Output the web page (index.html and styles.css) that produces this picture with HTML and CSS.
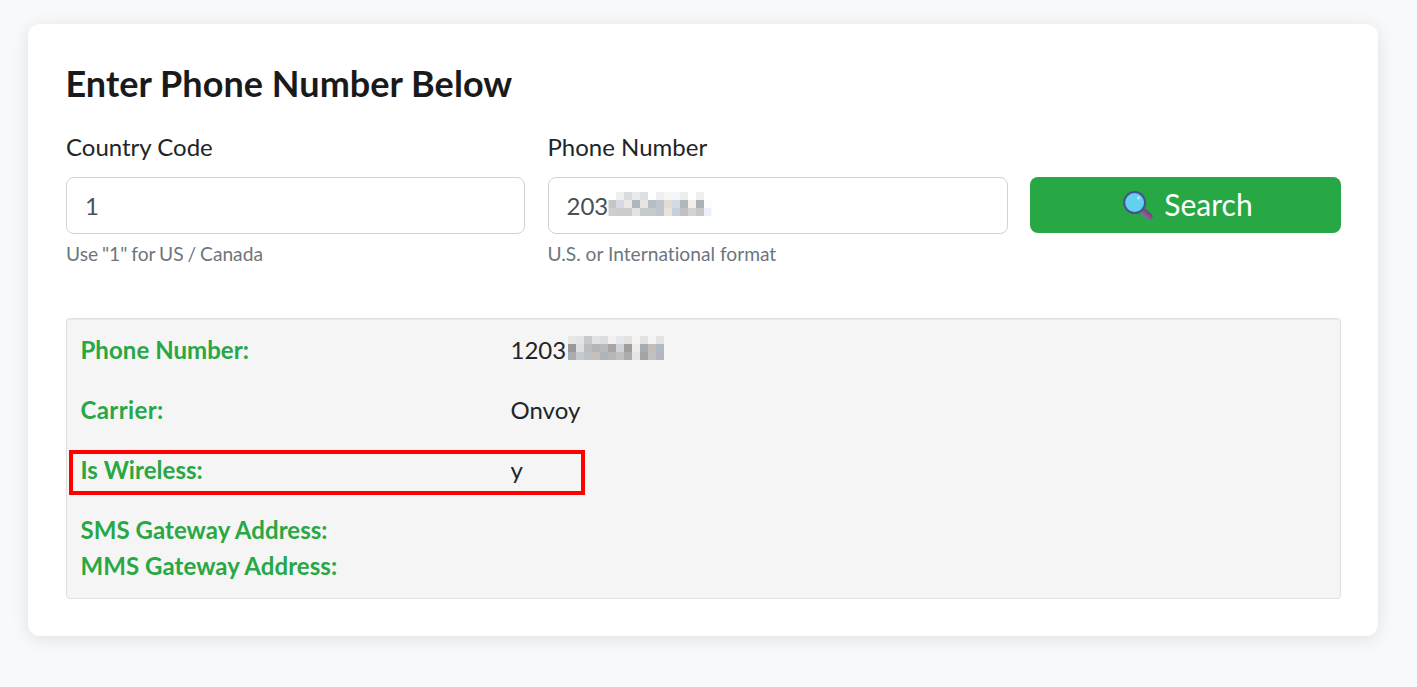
FILE: index.html
```html
<!DOCTYPE html>
<html lang="en">
<head>
    <meta charset="UTF-8">
    <title>Phone Number Lookup</title>
    <link rel="stylesheet" href="styles.css">
</head>
<body>
    <div class="card">
        <h1>Enter Phone Number Below</h1>

        <form class="lookup-form">
            <div class="form-group">
                <label for="countryCode">Country Code</label>
                <input type="text" id="countryCode" value="1">
                <small class="tight">Use "1" for US / Canada</small>
            </div>

            <div class="form-group">
                <label for="phoneNumber">Phone Number</label>
                <div class="input-wrap">
                    <input type="text" id="phoneNumber" value="203">
                    <svg class="mask mask-input" width="104" height="24" shape-rendering="crispEdges"></svg>
                </div>
                <small>U.S. or International format</small>
            </div>

            <button type="button" class="btn-search">
                <svg class="search-icon" viewBox="0 0 32 32" width="32" height="32">
                    <defs>
                        <linearGradient id="handle" x1="0" y1="1" x2="1" y2="0">
                            <stop offset="0" stop-color="#9b5fae"/>
                            <stop offset="1" stop-color="#70446f"/>
                        </linearGradient>
                    </defs>
                    <path d="M20 20l3 3" stroke="#533b78" stroke-width="3"/>
                    <path d="M22.5 22l4.8 4.8" stroke="url(#handle)" stroke-width="6.4" stroke-linecap="round"/>
                    <circle cx="12.6" cy="12.6" r="10.5" fill="#63d0ee" stroke="#4b4f8f" stroke-width="2"/>
                    <circle cx="16.5" cy="7.9" r="1.7" fill="#b5e7fa"/>
                </svg>
                <span>Search</span>
            </button>
        </form>

        <div class="results">
            <div class="row">
                <strong>Phone Number:</strong>
                <span class="value">1203<svg class="mask mask-result" width="96" height="24" shape-rendering="crispEdges"></svg></span>
            </div>
            <div class="row">
                <strong class="wide">Carrier:</strong>
                <span class="value">Onvoy</span>
            </div>
            <div class="row highlight">
                <strong>Is Wireless:</strong>
                <span class="value">y</span>
            </div>
            <div class="row compact">
                <strong>SMS Gateway Address:</strong>
            </div>
            <div class="row compact">
                <strong>MMS Gateway Address:</strong>
            </div>
        </div>
    </div>

    <script src="script.js"></script>
</body>
</html>
```
FILE: styles.css
```css
* {
    box-sizing: border-box;
}

body {
    margin: 0;
    padding: 24px 39px 0 28px;
    min-height: 687px;
    background-color: #f8f9fb;
    color: #212529;
    font-family: Lato, sans-serif;
    font-size: 24px;
    line-height: 36px;
    font-variant-ligatures: none;
}

.card {
    height: 612px;
    padding: 37px 37px 37px 38px;
    background-color: #fff;
    border-radius: 12px;
    box-shadow: 0 3px 18px rgba(0, 0, 0, 0.1);
}

h1 {
    margin: 0 0 24px -0.5px;
    color: #1a1a1a;
    font-size: 36px;
    font-weight: bold;
    line-height: 44px;
    letter-spacing: 0.05px;
}

.lookup-form {
    display: grid;
    grid-template-columns: 459px 460px 311px;
    justify-content: space-between;
    margin-bottom: 50px;
}

.form-group {
    display: flex;
    flex-direction: column;
}

label {
    margin-bottom: 12px;
}

input {
    display: block;
    width: 100%;
    height: 57px;
    padding: 0 18px;
    border: 1px solid #ced4da;
    border-radius: 8px;
    background-color: #fff;
    color: #495057;
    font-family: inherit;
    font-size: 24px;
}

.input-wrap {
    position: relative;
}

small {
    margin-top: 5px;
    color: #6c757d;
    font-size: 19.2px;
    line-height: 29px;
}

small.tight {
    word-spacing: -1px;
}

.btn-search {
    display: flex;
    justify-content: center;
    align-items: center;
    gap: 10px;
    height: 56px;
    margin-top: 48px;
    padding: 0 0 3px 4px;
    border: none;
    border-radius: 8px;
    background-color: #28a745;
    color: #fff;
    font-family: inherit;
    font-size: 30px;
    cursor: pointer;
}

.search-icon {
    position: relative;
    top: 2px;
}

.results {
    height: 281px;
    padding: 13px 13.5px;
    border: 1px solid #e0e0e0;
    border-radius: 4px;
    background-color: #f5f5f5;
    box-shadow: inset 0 1px 1px rgba(0, 0, 0, 0.05);
}

.row {
    position: relative;
    display: grid;
    grid-template-columns: 430px 1fr;
    height: 36px;
    margin-bottom: 24px;
}

.row.compact {
    margin-bottom: 0;
}

.row strong {
    color: #28a745;
    letter-spacing: 0.05px;
}

.row strong.wide {
    letter-spacing: 0.4px;
}

.value {
    position: relative;
}

.mask {
    position: absolute;
}

.mask-input {
    left: 60px;
    top: 15px;
    clip-path: inset(0 0 0 1px);
}

.mask-result {
    left: 57.5px;
    top: 4px;
}

.highlight::after {
    content: "";
    position: absolute;
    left: -11.5px;
    top: -2px;
    width: 508px;
    height: 37px;
    border: 4px solid #ff0000;
    box-sizing: content-box;
}
```
FILE: script.js
```js
// Pixel colours that hide the rest of each number, row by row
const inputMask = [
    "ffffff efefef d9dbdd e9eaec dedfe1 ffffff efefef f8f6f5 f4f6f9 ebeeed ffffff efefef ffffff",
    "c5c5c5 d4dae0 ebe7e4 b0b5b9 e8e4df b5bdc6 bfc4ce e1dbd6 d1dae6 b3b7bb f3eeeb abb1b6 fafcff",
    "cecece cacdce cacdcf e3e3e3 c7c8c8 c3c9cc bfc4ce e9e3dc c6cfdb c0c1c3 d3d3d3 c6c7c7 ebf0f6"
];

const resultMask = [
    "e6e6e5 e4e4e4 c8cac9 e1e1e2 d9dde0 f1f0ef e6e7ea e1e1e1 f4f4f4 e1e1e2 f4f4f4 e3e3e3",
    "999999 dce0e4 bcbdbc b3b5ba b8babd aaa5a5 ced2d9 9e9e9f f0ebe7 a7aab1 c2bfba b2b9c1",
    "aaacae c5c8cc bec2c6 c4c1bd b0b4b9 b8b7b5 bfc0c3 abacad e4e5e5 a3a4a5 c1c1c2 b3b7bd"
];

function drawMask(selector, rows) {
    const svg = document.querySelector(selector);

    rows.forEach((row, y) => {
        row.split(" ").forEach((color, x) => {
            const rect = document.createElementNS("http://www.w3.org/2000/svg", "rect");
            rect.setAttribute("x", x * 8);
            rect.setAttribute("y", y * 8);
            rect.setAttribute("width", 8);
            rect.setAttribute("height", 8);
            rect.setAttribute("fill", "#" + color);
            svg.appendChild(rect);
        });
    });
}

drawMask(".mask-input", inputMask);
drawMask(".mask-result", resultMask);
```
